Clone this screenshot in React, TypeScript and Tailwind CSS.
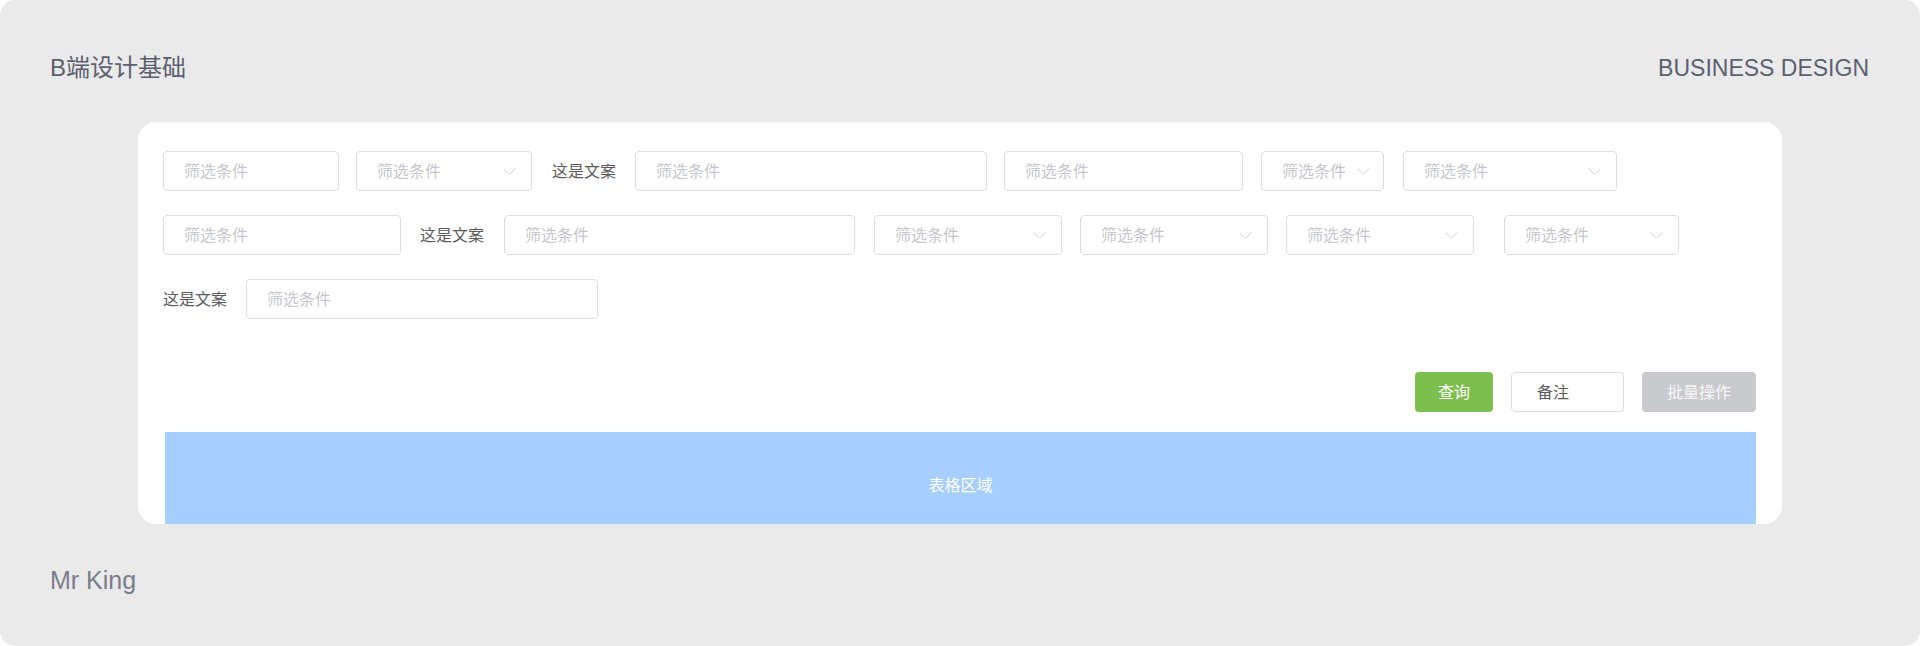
import React from 'react';

const FONT = { fontFamily: '"Liberation Sans", "Noto Sans CJK SC", sans-serif' };

function Chevron() {
  return (
    <svg width="13" height="7" viewBox="0 0 13 7" fill="none" className="shrink-0">
      <path d="M0.5 0.5L6.5 6.3L12.5 0.5" stroke="#d2d3d8" strokeWidth="1" />
    </svg>
  );
}

function TextField({ className }: { className: string }) {
  return (
    <input
      placeholder="筛选条件"
      className={`h-10 shrink-0 rounded border border-[#dcdde2] bg-white pt-px pl-5 text-base text-[#555] outline-none placeholder:text-[#c6c7cd] ${className}`}
    />
  );
}

function SelectField({ className, tight }: { className: string; tight?: boolean }) {
  return (
    <div
      className={`flex h-10 shrink-0 items-center justify-between rounded border border-[#dcdde2] bg-white pl-5 ${
        tight ? 'pr-[13px]' : 'pr-[15px]'
      } ${className}`}
    >
      <span className="pt-px text-base text-[#c6c7cd]">筛选条件</span>
      <Chevron />
    </div>
  );
}

function Label({ className }: { className: string }) {
  return (
    <span className={`flex h-10 w-16 shrink-0 items-center pt-px text-base text-[#5c5c5c] ${className}`}>这是文案</span>
  );
}

export default function App() {
  return (
    <div className="bg-white" style={FONT}>
      <div className="h-[646px] w-full rounded-[15px] bg-[#eaeaea] px-[50px] pt-[52px]">
        {/* header */}
        <div className="flex items-center justify-between">
          <h1 className="text-[24px] leading-8 font-normal text-[#5b5f6e]">B端设计基础</h1>
          <span className="pr-[1px] text-[23px] leading-8 text-[#5b6070]">BUSINESS DESIGN</span>
        </div>

        {/* filter card */}
        <div className="mx-[88px] mt-[38px] h-[402px] overflow-hidden rounded-[18px] bg-white">
          <div className="flex flex-col gap-6 pt-[29px] pl-[25px]">
            <div className="flex h-10 items-center">
              <TextField className="w-[176px]" />
              <SelectField className="ml-[17px] w-[176px]" />
              <Label className="ml-[20px]" />
              <TextField className="ml-[19px] w-[352px]" />
              <TextField className="ml-[17px] w-[239px]" />
              <SelectField className="ml-[18px] w-[123px]" tight />
              <SelectField className="ml-[19px] w-[214px]" />
            </div>
            <div className="flex h-10 items-center">
              <TextField className="w-[238px]" />
              <Label className="ml-[19px]" />
              <TextField className="ml-[20px] w-[351px]" />
              <SelectField className="ml-[19px] w-[188px]" />
              <SelectField className="ml-[18px] w-[188px]" />
              <SelectField className="ml-[18px] w-[188px]" />
              <SelectField className="ml-[30px] w-[175px]" />
            </div>
            <div className="flex h-10 items-center">
              <Label className="" />
              <TextField className="ml-[19px] w-[352px]" />
            </div>
          </div>

          {/* actions */}
          <div className="mt-[53px] flex justify-end gap-[18px] pr-[26px]">
            <button className="h-10 w-[78px] rounded bg-[#7ebe4e] pt-[2px] text-base text-white">查询</button>
            <button className="h-10 w-[113px] rounded border border-[#dcdde2] bg-white pt-[2px] pl-[25px] text-left text-base text-[#5c5c5c]">
              备注
            </button>
            <button className="h-10 w-[114px] rounded bg-[#c9cacd] pt-[2px] text-base text-[#f7f7f7]">批量操作</button>
          </div>

          {/* table placeholder */}
          <div className="mt-5 mr-[26px] ml-[27px] flex h-[104px] items-center justify-center bg-[#a6cefe] pt-[3px]">
            <span className="text-base text-white">表格区域</span>
          </div>
        </div>

        <div className="mt-[40px] text-[25px] leading-8 text-[#7b7e8a]">Mr King</div>
      </div>
    </div>
  );
}
